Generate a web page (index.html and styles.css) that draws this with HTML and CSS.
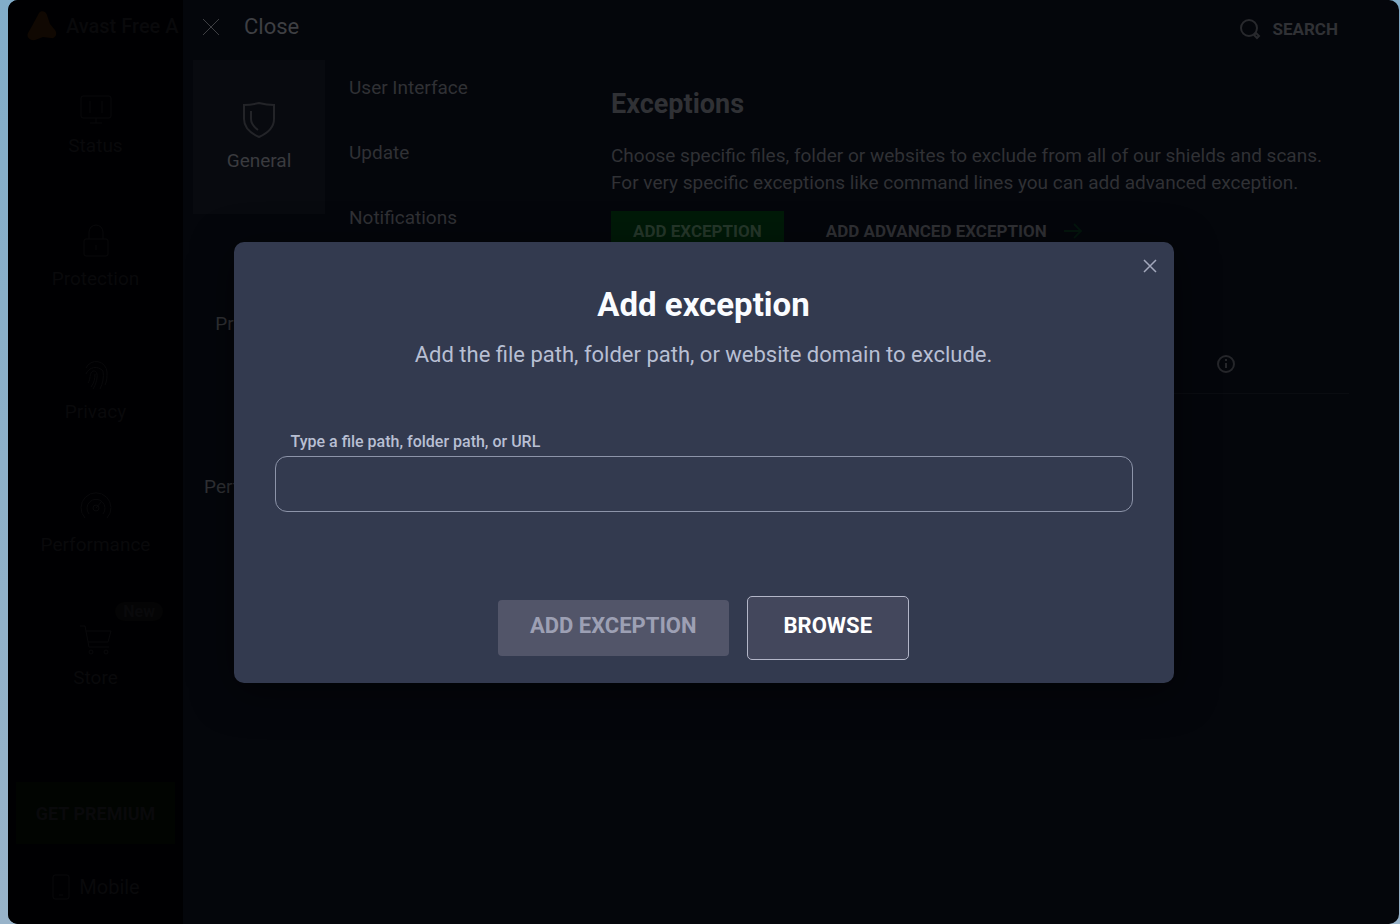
FILE: index.html
```html
<!DOCTYPE html>
<html lang="en">
<head>
    <meta charset="UTF-8">
    <meta name="viewport" content="width=device-width, initial-scale=1.0">
    <title>Add exception</title>
    <link rel="stylesheet" href="styles.css">
</head>
<body>
    <div class="window">
        <aside class="sidebar">
            <div class="brand">
                <svg width="32" height="32" viewBox="0 0 32 32"><path d="M13 3c2-3 7-2 8 2l3 9 5 6c3 4 0 9-4 8l-8-1-8 3c-5 1-9-3-7-7l4-7z" fill="currentColor"/></svg>
                <span>Avast Free A</span>
            </div>
            <nav class="side-nav">
                <a href="#" class="side-link">
                    <svg class="side-icon" viewBox="0 0 36 36"><rect x="3" y="6" width="30" height="22" rx="2"/><path d="M12 33h12M18 28v5M12 11v12M24 11v12"/></svg>
                    <span>Status</span>
                </a>
                <a href="#" class="side-link">
                    <svg class="side-icon" viewBox="0 0 36 36"><rect x="6" y="16" width="24" height="17" rx="2"/><path d="M11 16V9a7 7 0 0 1 14 0v7M18 22v5"/></svg>
                    <span>Protection</span>
                </a>
                <a href="#" class="side-link">
                    <svg class="side-icon" viewBox="0 0 36 36"><path d="M8 12a11 11 0 0 1 21 4c0 5 0 9-2 13M8 18a10 10 0 0 1 17-3c1 6 0 12-3 18M10 27c3-4 1-10 5-12 6-1 5 10 0 18M17 18c0 5-1 9-4 13"/></svg>
                    <span>Privacy</span>
                </a>
                <a href="#" class="side-link">
                    <svg class="side-icon" viewBox="0 0 36 36"><path d="M7 29a15 15 0 1 1 22 0M11 25a9 9 0 1 1 14 0M18 19l6-7"/><circle cx="18" cy="19" r="3"/></svg>
                    <span>Performance</span>
                </a>
                <a href="#" class="side-link">
                    <svg class="side-icon" viewBox="0 0 36 36"><path d="M2 4h5l4 21h20M8 9h25l-3 11H10"/><circle cx="13" cy="30" r="2"/><circle cx="28" cy="30" r="2"/></svg>
                    <span>Store</span>
                    <span class="badge">New</span>
                </a>
            </nav>
            <button class="premium">GET PREMIUM</button>
            <a href="#" class="mobile">
                <svg width="20" height="28" viewBox="0 0 20 28"><rect x="2" y="2" width="16" height="24" rx="2"/><path d="M8 22h4"/></svg>
                <span>Mobile</span>
            </a>
        </aside>

        <main class="settings">
            <header class="topbar">
                <button class="close">
                    <svg width="18" height="18" viewBox="0 0 18 18"><path d="M1 1l16 16M17 1L1 17"/></svg>
                    <span>Close</span>
                </button>
                <button class="search">
                    <svg width="22" height="22" viewBox="0 0 22 22"><circle cx="10" cy="10" r="8"/><path d="M15 17l2-2 3 3-2 2z"/></svg>
                    <span>SEARCH</span>
                </button>
            </header>

            <div class="columns">
                <nav class="categories">
                    <a href="#" class="category active">
                        <svg class="category-icon" viewBox="0 0 36 38"><path d="M18 2c4 1 9 2 15 2v14c0 8-6 14-15 18C9 32 3 26 3 18V4c6 0 11-1 15-2z"/><path d="M10 10v8c0 5 3 8 7 11"/></svg>
                        <span>General</span>
                    </a>
                    <a href="#" class="category">
                        <svg class="category-icon" viewBox="0 0 36 38"><rect x="6" y="17" width="24" height="17" rx="2"/><path d="M11 17v-7a7 7 0 0 1 14 0v7"/></svg>
                        <span>Protection</span>
                    </a>
                    <a href="#" class="category">
                        <svg class="category-icon" viewBox="0 0 36 38"><path d="M7 31a15 15 0 1 1 22 0M18 21l6-7"/></svg>
                        <span>Performance</span>
                    </a>
                </nav>

                <nav class="submenu">
                    <a href="#">User Interface</a>
                    <a href="#">Update</a>
                    <a href="#">Notifications</a>
                </nav>

                <section class="content">
                    <h1>Exceptions</h1>
                    <p>Choose specific files, folder or websites to exclude from all of our shields and scans.<br>For very specific exceptions like command lines you can add advanced exception.</p>
                    <div class="content-actions">
                        <button class="green">ADD EXCEPTION</button>
                        <button class="advanced">
                            <span>ADD ADVANCED EXCEPTION</span>
                            <svg width="20" height="16" viewBox="0 0 20 16"><path d="M1 8h17M11 1l7 7-7 7"/></svg>
                        </button>
                    </div>
                    <div class="list-head">
                        <svg width="20" height="20" viewBox="0 0 20 20"><circle cx="10" cy="10" r="8"/><path d="M10 9v5M10 5v2"/></svg>
                    </div>
                </section>
            </div>
        </main>

        <div class="overlay">
            <div class="dialog" role="dialog" aria-labelledby="dialog-title">
                <button class="dialog-close" aria-label="Close dialog">
                    <svg width="16" height="16" viewBox="0 0 16 16"><path d="M2 2l12 12M14 2L2 14"/></svg>
                </button>
                <h2 id="dialog-title">Add exception</h2>
                <p>Add the file path, folder path, or website domain to exclude.</p>
                <div class="field">
                    <label for="path">Type a file path, folder path, or URL</label>
                    <input type="text" id="path">
                </div>
                <div class="dialog-actions">
                    <button class="add" disabled>ADD EXCEPTION</button>
                    <button class="browse">BROWSE</button>
                </div>
            </div>
        </div>
    </div>
</body>
</html>
```
FILE: styles.css
```css
* {
    box-sizing: border-box;
    margin: 0;
    padding: 0;
}

body {
    font-family: Roboto, "Liberation Sans", sans-serif;
    background: linear-gradient(#82adc9, #98b3c9);
    padding: 0 1px 0 8px;
}

button {
    font-family: inherit;
    background: none;
    border: none;
    color: inherit;
    cursor: pointer;
}

a {
    color: inherit;
    text-decoration: none;
}

svg {
    fill: none;
    stroke: currentColor;
    stroke-width: 1;
    flex-shrink: 0;
}

.window {
    position: relative;
    display: flex;
    min-height: 100vh;
    background: #04060b;
    color: #303135;
    border-radius: 10px;
    overflow: hidden;
}

/* left app navigation */
.sidebar {
    display: flex;
    flex-direction: column;
    width: 175px;
    flex-shrink: 0;
    background: #000002;
    color: #09090b;
    overflow: hidden;
}

.brand {
    display: flex;
    align-items: center;
    gap: 8px;
    height: 52px;
    padding-left: 18px;
    font-size: 20px;
    font-weight: 500;
    white-space: nowrap;
}

.brand svg {
    color: #100802;
    stroke: none;
}

.side-nav {
    display: flex;
    flex-direction: column;
    padding-top: 6px;
}

.side-link {
    position: relative;
    display: flex;
    flex-direction: column;
    align-items: center;
    justify-content: center;
    gap: 8px;
    height: 133px;
    padding-bottom: 2px;
    font-size: 19px;
}

.side-icon {
    width: 36px;
    height: 36px;
}

.badge {
    position: absolute;
    top: 12px;
    right: 20px;
    padding: 0 8px;
    border-radius: 10px;
    background: #040405;
    font-size: 16px;
    font-weight: 700;
}

.premium {
    height: 62px;
    margin: auto 8px 20px;
    background: #010401;
    font-size: 18px;
    font-weight: 700;
}

.mobile {
    display: flex;
    align-items: center;
    justify-content: center;
    gap: 8px;
    height: 46px;
    margin-bottom: 14px;
    font-size: 20px;
}

/* settings panel */
.settings {
    flex: 1;
    min-width: 0;
}

.topbar {
    display: flex;
    align-items: center;
    justify-content: space-between;
    height: 54px;
    padding: 0 61px 0 19px;
}

.close {
    display: flex;
    align-items: center;
    gap: 24px;
    padding-bottom: 1px;
    font-size: 22px;
    color: #3e3f43;
}

.search {
    display: flex;
    align-items: center;
    gap: 12px;
    padding-top: 4px;
    font-size: 17px;
    font-weight: 700;
}

.search svg {
    stroke-width: 2;
    color: #28292d;
}

.columns {
    display: grid;
    grid-template-columns: 132px 262px 1fr;
    padding: 6px 50px 0 10px;
}

.category {
    display: flex;
    flex-direction: column;
    align-items: center;
    gap: 10px;
    height: 154px;
    margin-bottom: 9px;
    padding-top: 41px;
    font-size: 19px;
    line-height: 24px;
}

.category.active {
    background: #080a0f;
    color: #3a3b3f;
}

.category-icon {
    width: 36px;
    height: 38px;
    color: #232428;
    stroke-width: 2;
}

.submenu {
    display: flex;
    flex-direction: column;
    gap: 41px;
    padding: 16px 0 0 24px;
    font-size: 19px;
    line-height: 24px;
}

.content {
    padding: 28px 0 0 24px;
}

.content h1 {
    margin-bottom: 22px;
    font-size: 27px;
    line-height: 32px;
}

.content p {
    margin-bottom: 15px;
    font-size: 19px;
    line-height: 27px;
}

.content-actions {
    display: flex;
    gap: 20px;
    height: 40px;
}

.content-actions button {
    height: 40px;
    padding: 0 22px;
    font-size: 17px;
    font-weight: 700;
}

.content-actions .green {
    background: #001a08;
    color: #26382b;
}

.advanced {
    display: flex;
    align-items: center;
    gap: 16px;
}

.advanced svg {
    color: #04150d;
    stroke-width: 2;
}

.list-head {
    display: flex;
    align-items: center;
    justify-content: flex-end;
    height: 60px;
    margin-top: 83px;
    padding-right: 113px;
    border-bottom: 1px solid #0a0c11;
}

.list-head svg {
    color: #25262a;
    stroke-width: 2;
}

/* dialog */
.overlay {
    position: absolute;
    inset: 0;
    display: flex;
    align-items: center;
    justify-content: center;
}

.dialog {
    position: relative;
    width: 68%;
    max-width: 940px;
    padding: 44px 41px 23px;
    background: #333a4f;
    border-radius: 10px;
    text-align: center;
    box-shadow: 0 8px 40px rgba(0, 0, 0, 0.5);
}

.dialog-close {
    position: absolute;
    top: 16px;
    right: 16px;
    height: 16px;
    color: #a3a8bc;
}

.dialog-close svg {
    display: block;
    stroke-width: 1.5;
}

.dialog h2 {
    margin-bottom: 17px;
    color: #fafcff;
    font-size: 33px;
    line-height: 38px;
}

.dialog p {
    color: #b8bfd3;
    font-size: 22px;
    line-height: 28px;
}

.field {
    margin-top: 62px;
    text-align: left;
}

.field label {
    display: block;
    margin: 0 0 3px 16px;
    color: #b8bfd3;
    font-size: 16px;
    font-weight: 500;
    line-height: 22px;
}

.field input {
    display: block;
    width: 100%;
    height: 56px;
    padding: 0 16px;
    background: transparent;
    border: 1px solid #8d94a9;
    border-radius: 12px;
    color: #fafcff;
    font-family: inherit;
    font-size: 20px;
}

.dialog-actions {
    display: flex;
    align-items: center;
    justify-content: center;
    gap: 18px;
    margin-top: 84px;
}

.dialog-actions button {
    padding: 0 36px 4px;
    font-size: 22px;
    font-weight: 700;
}

.dialog-actions .add {
    height: 56px;
    padding: 0 32px 4px;
    background: #525569;
    border-radius: 4px;
    color: #9da0b4;
}

.browse {
    height: 64px;
    background: #43475c;
    border: 1px solid #b3b6c8;
    border-radius: 5px;
    color: #ffffff;
}
```
